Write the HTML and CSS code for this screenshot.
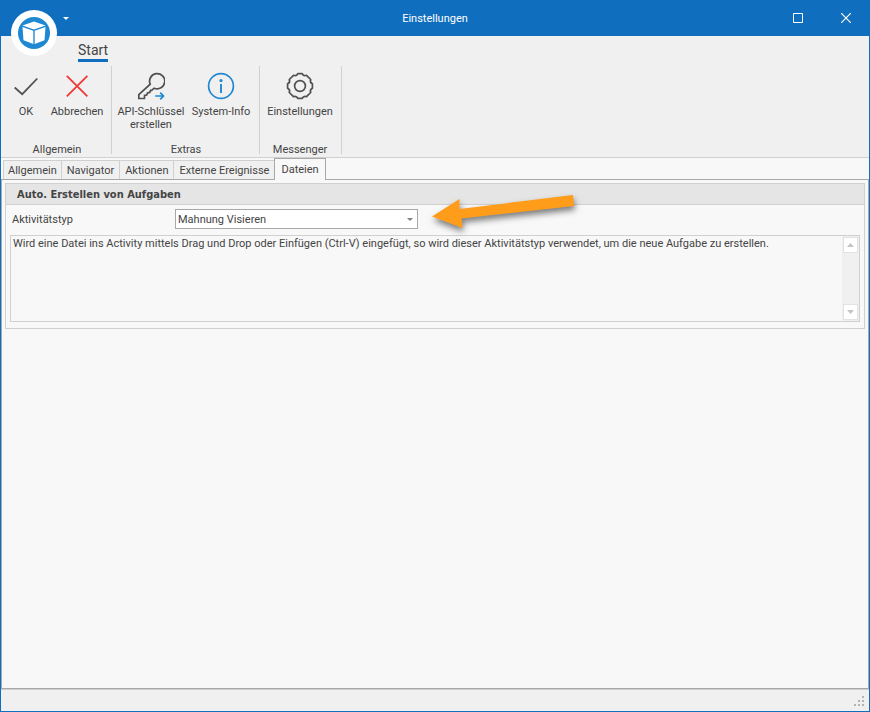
FILE: index.html
```html
<!DOCTYPE html>
<html lang="de">
<head>
  <meta charset="UTF-8">
  <meta name="viewport" content="width=device-width, initial-scale=1.0">
  <title>Einstellungen</title>
  <link rel="stylesheet" href="styles.css">
</head>
<body>
  <div class="window">
    <header class="titlebar">
      <button class="app-button" aria-label="Anwendung">
        <svg width="46" height="46" viewBox="0 0 46 46">
          <circle cx="23" cy="23" r="23" fill="#fff"/>
          <circle cx="23" cy="23" r="16" fill="#1e88d2"/>
          <path d="M23 11.500 34.500 15.500 23 19.500 11.500 15.500z" fill="#fff"/>
          <path d="M11.500 17 22.300 20.700V34L12.500 30.200z" fill="#fff"/>
          <path d="M34.500 17 23.700 20.700V34L33.500 30.200z" fill="#fff"/>
        </svg>
      </button>
      <button class="quick-menu" aria-label="Schnellzugriff anpassen">
        <svg width="6" height="3" viewBox="0 0 6 3"><path d="M0 0h6L3 3z" fill="#fff"/></svg>
      </button>
      <h1 class="title">Einstellungen</h1>
      <div class="window-buttons">
        <button aria-label="Maximieren">
          <svg width="10" height="10" viewBox="0 0 10 10"><path d="M.5.5h9v9h-9z" fill="none" stroke="#fff"/></svg>
        </button>
        <button aria-label="Schliessen">
          <svg width="10" height="10" viewBox="0 0 10 10"><path d="M0 0l10 10M10 0L0 10" stroke="#fff" stroke-width="1.200"/></svg>
        </button>
      </div>
    </header>

    <nav class="ribbon-tabs">
      <a class="ribbon-tab" href="#start">Start</a>
    </nav>

    <div class="ribbon" id="start">
      <section class="group">
        <div class="group-items">
          <button class="tool small">
            <svg width="28" height="28" viewBox="0 0 28 28"><path d="M2.700 15.500l7.500 6.700L25.300 6.500" fill="none" stroke="#505050" stroke-width="1.700"/></svg>
            <span>OK</span>
          </button>
          <button class="tool">
            <svg width="28" height="28" viewBox="0 0 28 28"><path d="M3.800 3.800l20.600 20.600M24.400 3.800L3.800 24.400" stroke="#ee3a36" stroke-width="1.800"/></svg>
            <span>Abbrechen</span>
          </button>
        </div>
        <h2>Allgemein</h2>
      </section>
      <section class="group">
        <div class="group-items">
          <button class="tool wide">
            <svg width="28" height="28" viewBox="0 0 28 28">
              <path d="M13.200 12.200A7.600 7.600 0 1 1 17.200 16.200L14.600 18.400 13.600 18.400 12.700 20.400 10.500 20.900 9.700 23 7.600 23.300 7.400 26.500H1.800V22.600z" fill="none" stroke="#505050" stroke-width="1.700"/>
              <path d="M18.200 24h8M23.200 20.700l3.300 3.300-3.300 3.300" fill="none" stroke="#1e88d2" stroke-width="1.700"/>
            </svg>
            <span>API-Schlüssel<br>erstellen</span>
          </button>
          <button class="tool wide">
            <svg width="28" height="28" viewBox="0 0 28 28">
              <circle cx="14" cy="14" r="12.400" fill="none" stroke="#1e88d2" stroke-width="1.700"/>
              <circle cx="14" cy="8.600" r="1.600" fill="#1e88d2"/>
              <path d="M14 12v9" stroke="#1e88d2" stroke-width="1.900"/>
            </svg>
            <span>System-Info</span>
          </button>
        </div>
        <h2>Extras</h2>
      </section>
      <section class="group">
        <div class="group-items">
          <button class="tool wide">
            <svg width="28" height="28" viewBox="0 0 28 28" fill="none" stroke="#505050" stroke-width="1.700">
              <circle cx="14" cy="14" r="5.400"/>
              <path d="M11.800 1.600H16.200Q17.500 4.500 20.500 3.300L24.700 7.500Q23.500 10.500 26.400 11.800V16.200Q23.500 17.500 24.700 20.500L20.500 24.700Q17.500 23.500 16.200 26.400H11.800Q10.500 23.500 7.500 24.700L3.300 20.500Q4.500 17.500 1.600 16.200V11.800Q4.500 10.500 3.300 7.500L7.500 3.300Q10.500 4.500 11.800 1.600z" stroke-linejoin="round"/>
            </svg>
            <span>Einstellungen</span>
          </button>
        </div>
        <h2>Messenger</h2>
      </section>
    </div>

    <main class="content">
      <div class="tabs" role="tablist">
        <button class="tab" role="tab">Allgemein</button>
        <button class="tab" role="tab">Navigator</button>
        <button class="tab" role="tab">Aktionen</button>
        <button class="tab" role="tab">Externe Ereignisse</button>
        <button class="tab active" role="tab" aria-selected="true">Dateien</button>
      </div>
      <div class="page" role="tabpanel">
        <section class="box">
          <h3>Auto. Erstellen von Aufgaben</h3>
          <div class="field">
            <label for="type">Aktivitätstyp</label>
            <div class="combo">
              <select id="type">
                <option>Mahnung Visieren</option>
              </select>
              <svg width="6" height="3" viewBox="0 0 6 3"><path d="M0 0h6L3 3z" fill="#808080"/></svg>
            </div>
            <svg class="arrow" width="150" height="44" viewBox="0 0 150 44">
              <path d="M5 26.500 32.500 9V19L146 5 147 16 34.500 28.500 35.500 38z" fill="#ff9c1a"/>
            </svg>
          </div>
          <div class="memo">
            <textarea aria-label="Beschreibung" readonly>Wird eine Datei ins Activity mittels Drag und Drop oder Einfügen (Ctrl-V) eingefügt, so wird dieser Aktivitätstyp verwendet, um die neue Aufgabe zu erstellen.</textarea>
            <div class="scrollbar">
              <button aria-label="Nach oben"><svg width="7" height="4" viewBox="0 0 7 4"><path d="M0 4h7L3.500 0z" fill="#c4c4c4"/></svg></button>
              <button aria-label="Nach unten"><svg width="7" height="4" viewBox="0 0 7 4"><path d="M0 0h7L3.500 4z" fill="#c4c4c4"/></svg></button>
            </div>
          </div>
        </section>
      </div>
    </main>

    <footer class="statusbar">
      <svg width="10" height="10" viewBox="0 0 10 10"><path d="M8 0h2v2h-2zM4 4h2v2H4zM8 4h2v2H8zM0 8h2v2H0zM4 8h2v2H4zM8 8h2v2H8z" fill="#b4b4b4"/></svg>
    </footer>
  </div>
</body>
</html>
```
FILE: styles.css
```css
* {
  box-sizing: border-box;
}
body {
  margin: 0;
  font-family: Tahoma, Roboto, sans-serif;
  font-size: 11px;
  line-height: 13px;
  color: #444;
}
h1, h2, h3 {
  margin: 0;
  font-size: 11px;
  font-weight: normal;
}
button, select, textarea {
  margin: 0;
  padding: 0;
  border: none;
  border-radius: 0;
  background: none;
  font: inherit;
  color: inherit;
}
svg {
  display: block;
  flex: none;
}
.window {
  display: flex;
  flex-direction: column;
  min-height: 100vh;
  border: 1px solid #106ebe;
  border-top: none;
  background-color: #f0f0f0;
}

/* title bar */
.titlebar {
  position: relative;
  display: flex;
  justify-content: center;
  align-items: center;
  height: 36px;
  background-color: #106ebe;
  color: #fff;
}
.app-button {
  position: absolute;
  left: 10px;
  top: 10px;
}
.quick-menu {
  position: absolute;
  left: 62px;
  top: 17px;
}
.window-buttons {
  position: absolute;
  right: -1px;
  top: 0;
  display: flex;
  height: 36px;
}
.window-buttons button {
  display: flex;
  justify-content: center;
  align-items: center;
  width: 48px;
}

/* ribbon */
.ribbon-tabs {
  display: flex;
  height: 30px;
  padding: 4px 77px;
}
.ribbon-tab {
  height: 22px;
  border-bottom: 3px solid #106ebe;
  font-size: 14px;
  line-height: 20px;
  color: #444;
  text-decoration: none;
}
.ribbon {
  display: flex;
  height: 92px;
  border-bottom: 1px solid #d0d0d0;
}
.group {
  display: flex;
  flex-direction: column;
  justify-content: space-between;
  height: 88px;
  padding: 6px 3px 0 5px;
  border-right: 1px solid #d0d0d0;
}
.group h2 {
  line-height: 8px;
  text-align: center;
}
.group-items {
  display: flex;
}
.tool {
  display: flex;
  flex-direction: column;
  align-items: center;
  gap: 5px;
  width: 62px;
}
.tool.small {
  width: 40px;
}
.tool.wide {
  width: 70px;
}
.tool span {
  white-space: nowrap;
}
.group:nth-child(n+2) {
  padding-left: 4px;
}
.group:last-child {
  padding: 6px 6px 0 5px;
}

/* tab pages */
.content {
  display: flex;
  flex: 1;
  flex-direction: column;
  background-color: #f8f8f8;
}
.tabs {
  display: flex;
  align-items: flex-end;
  height: 21px;
  padding-left: 2px;
}
.tab {
  height: 19px;
  padding: 0 5px;
  border: 1px solid #d0d0d0;
  border-width: 1px 1px 0 0;
  background-color: #f0f0f0;
  white-space: nowrap;
}
.tab:first-child {
  padding: 0 4px;
  border-left-width: 1px;
}
.tab.active {
  z-index: 1;
  height: 22px;
  margin-bottom: -1px;
  margin-left: -1px;
  padding: 0 6px;
  border: 1px solid #a8a8a8;
  border-bottom: none;
  background-color: #f8f8f8;
}
.page {
  flex: 1;
  padding: 3px;
  border: 1px solid #a8a8a8;
}
.box {
  border: 1px solid #d0d0d0;
}
.box h3 {
  padding: 1px 11px 0;
  border-bottom: 1px solid #d0d0d0;
  background-color: #e5e5e5;
  font-family: Tahoma, "DejaVu Sans Condensed", sans-serif;
  font-weight: bold;
  line-height: 19px;
}
.field {
  position: relative;
  display: flex;
  align-items: center;
  padding: 4px 6px;
}
.field label {
  width: 163px;
}
.combo {
  position: relative;
  width: 243px;
}
.combo select {
  display: block;
  width: 100%;
  height: 20px;
  padding: 0 2px;
  border: 1px solid #a8a8a8;
  background-color: #fff;
  appearance: none;
}
.combo svg {
  position: absolute;
  right: 5px;
  top: 9px;
  pointer-events: none;
}
.arrow {
  position: absolute;
  left: 421px;
  top: -15px;
  overflow: visible;
  filter: drop-shadow(1px 4px 3px rgba(0, 0, 0, 0.5));
}
.memo {
  display: flex;
  height: 87px;
  margin: 2px 4px 6px;
  border: 1px solid #d0d0d0;
}
.memo textarea {
  flex: 1;
  padding: 1px 2px;
  outline: none;
  resize: none;
  overflow: hidden;
}
.scrollbar {
  display: flex;
  flex-direction: column;
  justify-content: space-between;
  padding: 1px;
  background-color: #f0f0f0;
}
.scrollbar button {
  display: flex;
  justify-content: center;
  align-items: center;
  width: 15px;
  height: 16px;
  border: 1px solid #e2e2e2;
  background-color: #fff;
}

.statusbar {
  display: flex;
  justify-content: flex-end;
  align-items: flex-end;
  height: 22px;
  padding: 5px;
  border-top: 1px solid #d0d0d0;
}
```
